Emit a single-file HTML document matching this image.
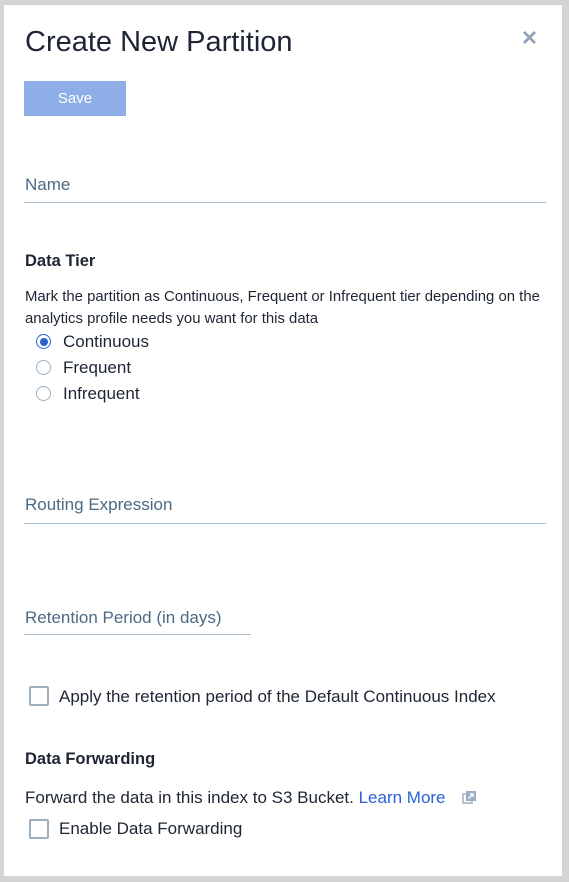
<!DOCTYPE html>
<html><head><meta charset="utf-8"><style>
html,body{margin:0;padding:0;width:569px;height:882px;overflow:hidden;background:#d4d4d4;font-family:"Liberation Sans",sans-serif;}
.panel{position:absolute;left:4px;top:5px;width:558px;height:871px;background:#fff;}
.a{position:absolute;white-space:nowrap;}
.lbl{font-size:17px;color:#4d6984;}
.line{position:absolute;height:1px;background:#a9bccb;}
.h{font-size:16.5px;font-weight:bold;color:#1e2533;}
.t{color:#1e2533;}
.radio{position:absolute;width:13px;height:13px;border:1.5px solid #9db0c2;border-radius:50%;}
.cb{position:absolute;width:16px;height:16px;border:2px solid #9db0c2;border-radius:2px;}
</style></head><body>
<div class="panel"></div>
<div class="a t" style="left:25px;top:26px;font-size:29px;color:#1e2533;">Create New Partition</div>
<svg class="a" style="left:522px;top:30px" width="15" height="15" viewBox="0 0 15 15"><path d="M2 2L13 13M13 2L2 13" stroke="#8fa4b8" stroke-width="2.8"/></svg>
<div class="a" style="left:24px;top:81px;width:102px;height:35px;background:#8eaee8;color:#fff;font-size:15px;line-height:35px;text-align:center;">Save</div>
<div class="a lbl" style="left:25px;top:175px;">Name</div>
<div class="line" style="left:24px;top:202px;width:522px;"></div>
<div class="a h" style="left:25px;top:252px;">Data Tier</div>
<div class="a t" style="left:25px;top:286px;font-size:14.9px;line-height:22px;">Mark the partition as Continuous, Frequent or Infrequent tier depending on the<br>analytics profile needs you want for this data</div>
<div class="radio" style="left:36px;top:334px;border-color:#2a62d6;"></div>
<div class="a" style="left:40px;top:338px;width:8px;height:8px;border-radius:50%;background:#2a62d6;"></div>
<div class="radio" style="left:36px;top:360px;"></div>
<div class="radio" style="left:36px;top:386px;"></div>
<div class="a t" style="left:63px;top:332px;font-size:17px;">Continuous</div>
<div class="a t" style="left:63px;top:358px;font-size:17px;">Frequent</div>
<div class="a t" style="left:63px;top:384px;font-size:17px;">Infrequent</div>
<div class="a lbl" style="left:25px;top:495px;">Routing Expression</div>
<div class="line" style="left:24px;top:523px;width:522px;"></div>
<div class="a lbl" style="left:25px;top:608px;">Retention Period (in days)</div>
<div class="line" style="left:24px;top:634px;width:227px;"></div>
<div class="cb" style="left:29px;top:686px;"></div>
<div class="a t" style="left:59px;top:687px;font-size:17px;">Apply the retention period of the Default Continuous Index</div>
<div class="a h" style="left:25px;top:750px;">Data Forwarding</div>
<div class="a t" style="left:25px;top:788px;font-size:17px;">Forward the data in this index to S3 Bucket. <span style="color:#2a62d6">Learn More</span></div>
<svg class="a" style="left:462px;top:790px" width="15" height="15" viewBox="0 0 15 15"><rect x="1" y="4" width="9" height="9" fill="none" stroke="#9db0c2" stroke-width="1.5"/><rect x="4" y="1" width="10" height="10" fill="#9db0c2"/><path d="M6.5 8.5L11 4M8 4H11V7" stroke="#fff" stroke-width="1.4" fill="none"/></svg>
<div class="cb" style="left:29px;top:819px;"></div>
<div class="a t" style="left:59px;top:819px;font-size:17px;">Enable Data Forwarding</div>
</body></html>
